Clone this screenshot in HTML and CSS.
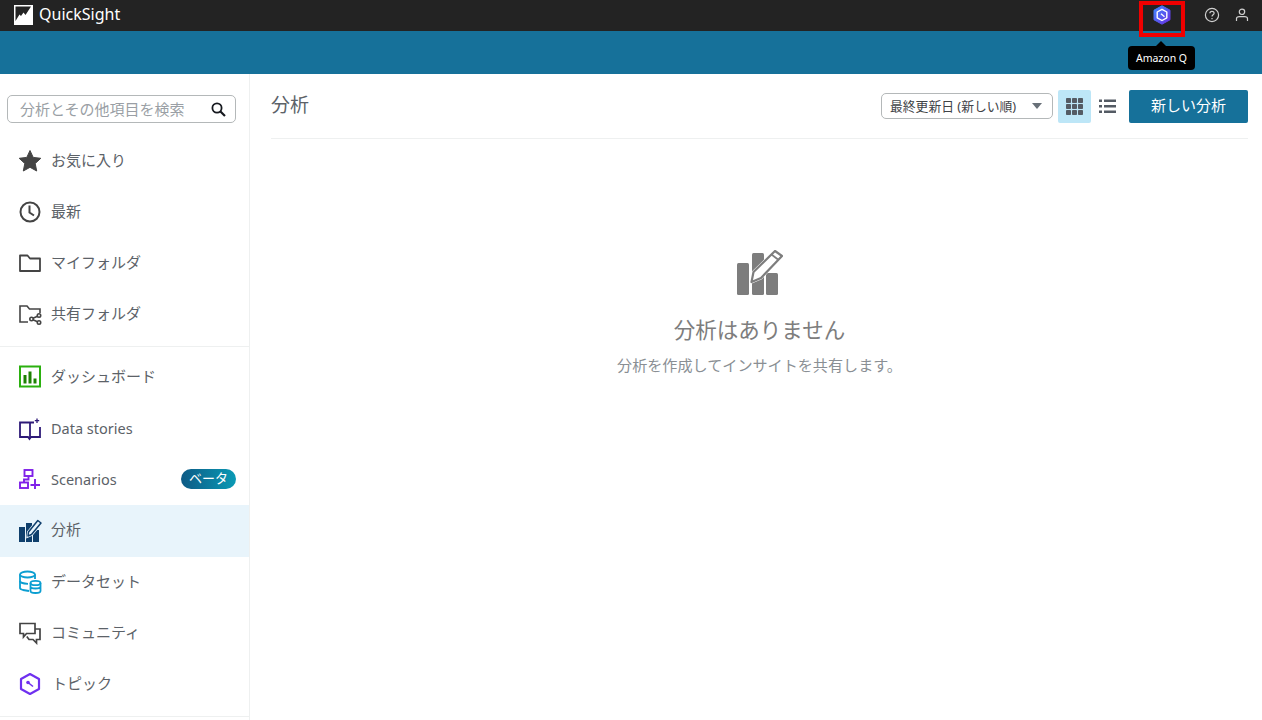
FILE: index.html
```html
<!DOCTYPE html>
<html lang="ja">
<head>
<meta charset="utf-8">
<title>QuickSight</title>
<link rel="stylesheet" href="styles.css">
</head>
<body>
<div class="topbar">
	<div class="brand">
		<svg class="logo" width="19" height="20" viewBox="0 0 19 20"><rect width="19" height="20" fill="#fff"/><path d="M1.500 16 L1.500 1.500 L17 1.500 L11.500 10 L9.500 7.500 L7 11 L5.500 9.500 Z" fill="#232323"/></svg>
		<span class="brandName">QuickSight</span>
	</div>
	<div class="topIcons">
		<svg class="qIcon" width="18" height="20" viewBox="0 0 18 20">
			<defs><linearGradient id="qGrad" x1="0" y1="0" x2="1" y2="1"><stop offset="0" stop-color="#3f8cff"/><stop offset="1" stop-color="#6a2be0"/></linearGradient></defs>
			<path d="M9 0.800 L17 5.200 L17 14.800 L9 19.200 L1 14.800 L1 5.200 Z" fill="url(#qGrad)" stroke="url(#qGrad)" stroke-width="1" stroke-linejoin="round"/>
			<path d="M9 4.300 L13.800 7 L13.800 12.800 L9 15.500 L4.200 12.800 L4.200 7 Z" fill="none" stroke="#fff" stroke-width="1.400" stroke-linejoin="round"/>
			<path d="M8 8.800 L11.500 11.800" stroke="#fff" stroke-width="1.300"/>
		</svg>
		<svg class="helpIcon" width="16" height="16" viewBox="0 0 16 16" fill="none" stroke="#cfcfcf" stroke-width="1.200"><circle cx="8" cy="8" r="6.600"/><path d="M5.900 6.300 C5.900 3.800 10.100 3.800 10.100 6.200 C10.100 7.800 8 7.800 8 9.500"/><path d="M8 11 L8 12.200"/></svg>
		<svg class="userIcon" width="14" height="14" viewBox="0 0 14 14" fill="none" stroke="#cfcfcf" stroke-width="1.200"><circle cx="7" cy="3.800" r="2.700"/><path d="M1.500 13 L1.500 10.500 C1.500 9.300 3 8.600 4.500 8.600 L9.500 8.600 C11 8.600 12.500 9.300 12.500 10.500 L12.500 13"/></svg>
	</div>
	<div class="qHighlight"></div>
	<div class="tooltip">Amazon Q</div>
</div>
<div class="bluebar"></div>

<div class="page">
	<div class="sidebar">
		<div class="searchWrap">
			<div class="searchBox">
				<span class="searchText">分析とその他項目を検索</span>
				<svg width="15" height="15" viewBox="0 0 15 15" fill="none" stroke="#16191f" stroke-width="1.800"><circle cx="6" cy="6" r="4.600"/><path d="M9.500 9.500 L14 14" stroke-width="2.200"/></svg>
			</div>
		</div>
		<div class="navGroup">
			<div class="navItem">
				<svg class="navIcon" width="24" height="24" viewBox="0 0 24 24"><path d="M12 1.500 L15.200 8.400 L22.800 9.300 L17.200 14.500 L18.700 22 L12 18.300 L5.300 22 L6.800 14.500 L1.200 9.300 L8.800 8.400 Z" fill="#444" stroke="#444" stroke-linejoin="round"/></svg>
				<span class="navLabel">お気に入り</span>
			</div>
			<div class="navItem">
				<svg class="navIcon" width="24" height="24" viewBox="0 0 24 24" fill="none" stroke="#444" stroke-width="2"><circle cx="12" cy="12" r="9.500"/><path d="M11.500 5.500 L11.500 12.500 L16 15.500"/></svg>
				<span class="navLabel">最新</span>
			</div>
			<div class="navItem">
				<svg class="navIcon" width="24" height="24" viewBox="0 0 24 24" fill="none" stroke="#444" stroke-width="1.800"><path d="M2 20 L2 4.500 L9.500 4.500 L12 7.500 L22 7.500 L22 20 Z" stroke-linejoin="round"/></svg>
				<span class="navLabel">マイフォルダ</span>
			</div>
			<div class="navItem">
				<svg class="navIcon" width="24" height="24" viewBox="0 0 24 24" fill="none" stroke="#444" stroke-width="1.600"><path d="M10 20 L2 20 L2 4 L9 4 L11.500 7 L22 7 L22 11"/><circle cx="21" cy="13.500" r="1.700"/><circle cx="21" cy="20.500" r="1.700"/><circle cx="13.500" cy="17" r="1.700"/><path d="M15 16.200 L19.500 14.200 M15 17.800 L19.500 19.800"/></svg>
				<span class="navLabel">共有フォルダ</span>
			</div>
		</div>
		<div class="navGroup">
			<div class="navItem">
				<svg class="navIcon" width="24" height="24" viewBox="0 0 24 24"><rect x="2" y="1.500" width="20" height="20" fill="none" stroke="#2bb00f" stroke-width="2"/><path d="M5.500 10 H8.500 V18.500 H5.500 Z M10.500 6.500 H13.500 V18.500 H10.500 Z M15.500 13.500 H18.500 V18.500 H15.500 Z" fill="#1d8102"/></svg>
				<span class="navLabel">ダッシュボード</span>
			</div>
			<div class="navItem">
				<svg class="navIcon" width="24" height="24" viewBox="0 0 24 24" fill="none" stroke="#2e1a78" stroke-width="1.800"><path d="M16 5.500 L2 5.500 L2 20 L10 20 L11.500 22 L13 20 L22 20 L22 10"/><path d="M12 6 L12 21"/><path d="M19 1.500 L19 6 M16.800 3.700 L21.200 3.700" stroke-width="1.300"/></svg>
				<span class="navLabel navLatin">Data stories</span>
			</div>
			<div class="navItem">
				<svg class="navIcon" width="24" height="24" viewBox="0 0 24 24" fill="none" stroke="#7f20e8" stroke-width="1.900"><rect x="6.500" y="2" width="8" height="6"/><rect x="2" y="14.500" width="8" height="5.500"/><path d="M10.500 8 L10.500 11.500 L6 11.500 L6 14.500"/><path d="M17 11 L17 21 M12.500 17 L22 17"/></svg>
				<span class="navLabel navLatin">Scenarios</span>
				<span class="betaBadge">ベータ</span>
			</div>
			<div class="navItem navActive">
				<svg class="navIcon" width="24" height="24" viewBox="0 0 24 24"><rect x="1" y="8" width="6" height="15" fill="#0f3f6c"/><rect x="8" y="4" width="6" height="19" fill="#0f3f6c"/><rect x="15" y="11" width="6" height="12" fill="#0f3f6c"/><path d="M10 17 L10.500 13 L19.800 1.500 L23 4 L13.500 15.500 Z" fill="#e8f4fb" stroke="#e8f4fb" stroke-width="3"/><path d="M10 17 L10.500 13 L19.800 1.500 L23 4 L13.500 15.500 Z" fill="#e8f4fb" stroke="#0f3f6c" stroke-width="1.500" stroke-linejoin="round"/></svg>
				<span class="navLabel">分析</span>
			</div>
			<div class="navItem">
				<svg class="navIcon" width="24" height="24" viewBox="0 0 24 24" fill="none" stroke="#0b9ed1" stroke-width="1.800"><path d="M11 21 L5 20 C3 19.500 2 18.800 2 18 L2 4.500 C2 2.800 5.500 1.500 9.500 1.500 C13.500 1.500 17 2.800 17 4.500 L17 9"/><path d="M2 4.500 C2 6.200 5.500 7.500 9.500 7.500 C13.500 7.500 17 6.200 17 4.500"/><path d="M2 11 C2 12.500 5.500 13.800 10 13.800"/><ellipse cx="17.500" cy="13" rx="5" ry="2.200"/><path d="M12.500 13 L12.500 21 C12.500 22.200 15 23 17.500 23 C20 23 22.500 22.200 22.500 21 L22.500 13 M12.500 16.500 C12.500 17.700 15 18.500 17.500 18.500 C20 18.500 22.500 17.700 22.500 16.500"/></svg>
				<span class="navLabel">データセット</span>
			</div>
			<div class="navItem">
				<svg class="navIcon" width="24" height="24" viewBox="0 0 24 24" fill="none" stroke="#444" stroke-width="1.700"><path d="M2 2.500 L17 2.500 L17 12.500 L8.500 12.500 L5.500 16 L5.500 12.500 L2 12.500 Z"/><path d="M17 8 L22 8 L22 18.500 L18.500 18.500 L18.500 22 L15 18.500 L11 18.500 L8.800 15.500"/></svg>
				<span class="navLabel">コミュニティ</span>
			</div>
			<div class="navItem navTopic">
				<svg class="navIcon" width="24" height="24" viewBox="0 0 24 24" fill="none" stroke="#6f30ef" stroke-width="2.200"><path d="M12 2 L21 7 L21 17 L12 22 L3 17 L3 7 Z" stroke-linejoin="round"/><path d="M10 10.500 L15 14.500" stroke-width="1.600"/><circle cx="10" cy="10.500" r="1.800" fill="#6f30ef" stroke="none"/></svg>
				<span class="navLabel">トピック</span>
			</div>
		</div>
	</div>

	<div class="main">
		<div class="mainHead">
			<span class="mainTitle">分析</span>
			<div class="headTools">
				<div class="sortSelect">
					<span class="sortText">最終更新日 (新しい順)</span>
					<span class="caret"></span>
				</div>
				<div class="viewBtn viewActive">
					<svg width="17" height="17" viewBox="0 0 17 17" fill="#545b64"><rect width="5" height="5" rx="0.800"/><rect x="6" width="5" height="5" rx="0.800"/><rect x="12" width="5" height="5" rx="0.800"/><rect y="6" width="5" height="5" rx="0.800"/><rect x="6" y="6" width="5" height="5" rx="0.800"/><rect x="12" y="6" width="5" height="5" rx="0.800"/><rect y="12" width="5" height="5" rx="0.800"/><rect x="6" y="12" width="5" height="5" rx="0.800"/><rect x="12" y="12" width="5" height="5" rx="0.800"/></svg>
				</div>
				<div class="viewBtn viewList">
					<svg width="17" height="15" viewBox="0 0 17 15" fill="#545b64"><rect y="0.500" width="3" height="2.500"/><rect x="5" y="0.500" width="12" height="2.500"/><rect y="6" width="3" height="2.500"/><rect x="5" y="6" width="12" height="2.500"/><rect y="11.500" width="3" height="2.500"/><rect x="5" y="11.500" width="12" height="2.500"/></svg>
				</div>
				<div class="newBtn">新しい分析</div>
			</div>
		</div>
		<div class="emptyState">
			<svg width="46" height="46" viewBox="0 0 46 46">
				<rect x="0" y="13" width="12" height="32" rx="1.500" fill="#7d7d7d"/>
				<rect x="15" y="3" width="12" height="42" rx="1.500" fill="#7d7d7d"/>
				<rect x="29" y="23" width="12" height="22" rx="1.500" fill="#7d7d7d"/>
				<path d="M14.500 32 L16.500 22 L38 1 L45 6 L24 28 Z" fill="#fff" stroke="#fff" stroke-width="3"/>
				<path d="M14.500 32 L16.500 22 L38 1 L45 6 L24 28 Z" fill="#fff" stroke="#7d7d7d" stroke-width="2.200" stroke-linejoin="round"/>
				<path d="M34.500 4.500 L41 9.500" stroke="#7d7d7d" stroke-width="1.800"/>
			</svg>
			<div class="emptyTitle">分析はありません</div>
			<div class="emptySub">分析を作成してインサイトを共有します。</div>
		</div>
	</div>
</div>
</body>
</html>
```

FILE: styles.css
```css
html, body
{
	margin: 0;
	height: 720px;
	overflow: hidden;
	background-color: #fff;
}
body
{
	font-family: "Noto Sans", "Noto Sans CJK JP", sans-serif;
	color: #5c6268;
}
.topbar
{
	position: relative;
	display: flex;
	justify-content: space-between;
	align-items: center;
	box-sizing: border-box;
	height: 31px;
	padding-bottom: 2px;
	background-color: #232323;
}
.brand
{
	display: flex;
	align-items: center;
	gap: 6px;
	padding-left: 14px;
}
.brandName
{
	color: #fff;
	font-size: 16px;
	margin-bottom: 1px;
}
.topIcons
{
	display: flex;
	align-items: center;
	padding-right: 13px;
}
.qIcon
{
	margin-right: 33px;
}
.helpIcon
{
	margin-right: 15px;
}
.qHighlight
{
	position: absolute;
	left: 1139px;
	top: 1px;
	width: 38px;
	height: 28px;
	border: 4px solid #f00000;
}
.tooltip
{
	position: absolute;
	left: 1128px;
	top: 46px;
	z-index: 2;
	width: 67px;
	height: 24px;
	line-height: 24px;
	border-radius: 4px;
	background-color: #000;
	color: #fff;
	font-size: 10.500px;
	text-align: center;
}
.tooltip::before
{
	content: "";
	position: absolute;
	left: 28px;
	top: -5px;
	border-left: 5px solid transparent;
	border-right: 5px solid transparent;
	border-bottom: 5px solid #000;
}
.bluebar
{
	height: 43px;
	background-color: #16719a;
}
.page
{
	display: flex;
	height: 646px;
}
.sidebar
{
	width: 249px;
	flex-shrink: 0;
	border-right: 1px solid #eef0f0;
}
.searchWrap
{
	padding: 21px 13px 12px 7px;
}
.searchBox
{
	display: flex;
	justify-content: space-between;
	align-items: center;
	box-sizing: border-box;
	height: 28px;
	padding: 0 9px 0 12px;
	border: 1px solid #b4b8b9;
	border-radius: 5px;
}
.searchText
{
	color: #9a9fa5;
	font-size: 15px;
	margin-bottom: 2px;
}
.navGroup
{
	padding-bottom: 6px;
	margin-bottom: 5px;
	border-bottom: 1px solid #eef0f0;
}
.navItem
{
	position: relative;
	display: flex;
	align-items: center;
	height: 51.200px;
	padding-left: 18px;
}
.navIcon
{
	margin-right: 9px;
	flex-shrink: 0;
}
.navLabel
{
	font-size: 15px;
	margin-bottom: 3px;
}
.navGroup + .navGroup .navLabel
{
	margin-bottom: 4px;
}
.navGroup + .navGroup .navLatin
{
	font-size: 14.500px;
	margin-bottom: 2px;
}
.navActive
{
	background-color: #e8f4fb;
}
.navTopic .navLabel
{
	margin-left: 1px;
}
.betaBadge
{
	position: absolute;
	left: 181px;
	top: 15px;
	width: 55px;
	height: 20px;
	line-height: 18px;
	border-radius: 10px;
	background: linear-gradient(90deg, #0d5a85, #0a9ab5);
	color: #fff;
	font-size: 13px;
	text-align: center;
}
.main
{
	flex: 1;
	padding: 0 14px 0 21px;
}
.mainHead
{
	display: flex;
	justify-content: space-between;
	align-items: center;
	height: 64px;
	border-bottom: 1px solid #eef0f0;
}
.mainTitle
{
	font-size: 19px;
	margin-bottom: 4px;
}
.headTools
{
	display: flex;
	align-items: center;
}
.sortSelect
{
	display: flex;
	justify-content: space-between;
	align-items: center;
	box-sizing: border-box;
	width: 172px;
	height: 26px;
	padding: 0 10px 0 8px;
	border: 1px solid #b4b8b9;
	border-radius: 5px;
}
.sortText
{
	color: #3f4347;
	font-size: 12.800px;
	margin-bottom: 2px;
}
.caret
{
	border-left: 5.500px solid transparent;
	border-right: 5.500px solid transparent;
	border-top: 6px solid #687078;
}
.viewBtn
{
	display: flex;
	justify-content: center;
	align-items: center;
	width: 33px;
	height: 33px;
	border-radius: 2px;
}
.viewList
{
	margin-right: 5px;
}
.viewActive
{
	margin-left: 5px;
	background-color: #bde6f7;
}
.newBtn
{
	width: 119px;
	height: 33px;
	line-height: 30px;
	border-radius: 2px;
	background-color: #16719a;
	color: #fff;
	font-size: 15px;
	text-align: center;
}
.emptyState
{
	display: flex;
	flex-direction: column;
	align-items: center;
	padding-top: 111px;
}
.emptyTitle
{
	margin-top: 19px;
	color: #7d7d7d;
	font-size: 21.500px;
	line-height: 30px;
}
.emptySub
{
	margin-top: 10px;
	color: #8a8f94;
	font-size: 15.100px;
	line-height: 20px;
}
```
